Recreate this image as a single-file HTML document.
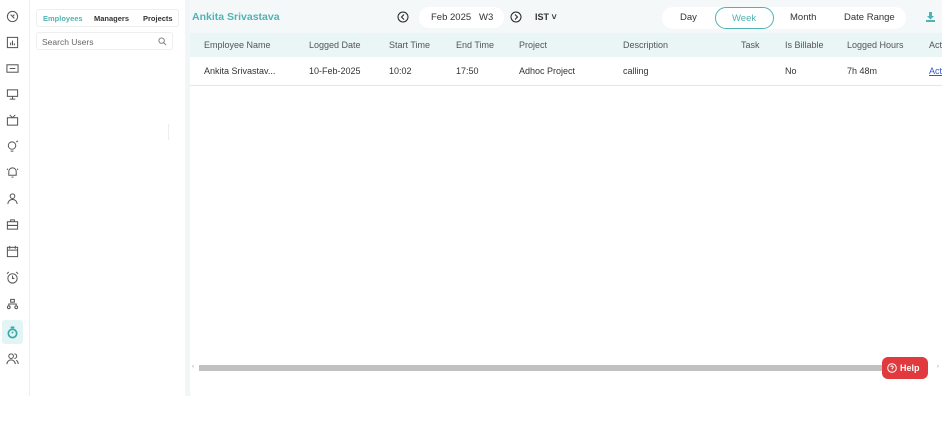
<!DOCTYPE html>
<html><head><meta charset="utf-8"><style>
*{margin:0;padding:0;box-sizing:border-box}
body{width:942px;height:448px;background:#fff;font-family:"Liberation Sans",sans-serif;font-size:9px;color:#333;position:relative;overflow:hidden}
.rail{position:absolute;left:0;top:0;width:30px;height:396px;border-right:1px solid #eee}
.rail svg{position:absolute;left:6px;width:13px;height:13px;fill:none;stroke:#555;stroke-width:1.1}
.panel{position:absolute;left:31px;top:0;width:154px;height:396px}
.tabs{position:absolute;left:5px;top:9px;width:143px;height:18px;border:1px solid #eee;border-radius:3px;font-size:7.5px;font-weight:bold}
.tabs span{position:absolute;top:4px}
.search{position:absolute;left:5px;top:32px;width:137px;height:18px;border:1px solid #eee;border-radius:3px;color:#666;font-size:8.5px;padding:4px 5px}
.split{position:absolute;left:185px;top:0;width:5px;height:396px;background:#f3f6f7}
.main{position:absolute;left:190px;top:0;width:752px;height:396px}
.hdr{position:absolute;left:0;top:0;width:752px;height:33px;background:#f5f8f9}
.th{position:absolute;left:0;top:33px;width:752px;height:24px;background:#eaf5f6}
.row{position:absolute;left:0;top:57px;width:752px;height:29px;border-bottom:1px solid #e6e6e6}
.c{position:absolute;white-space:nowrap}
.th .c{top:7px;color:#555}.row .c{top:9px;color:#333}
</style></head><body>
<div class="rail">
<svg style="top:10px" viewBox="0 0 14 14"><circle cx="7" cy="7" r="5.5"/><path d="M5 5l4 4M9 5l-2 2"/></svg>
<svg style="top:36px" viewBox="0 0 14 14"><rect x="1.5" y="1.5" width="11" height="11"/><path d="M5 10V7M7 10V5M9 10V8"/></svg>
<svg style="top:62px" viewBox="0 0 14 14"><rect x="1" y="3" width="12" height="8"/><path d="M4 7h6"/></svg>
<svg style="top:88px" viewBox="0 0 14 14"><rect x="1.5" y="2" width="11" height="7"/><path d="M7 9v3M4 12h6"/></svg>
<svg style="top:114px" viewBox="0 0 14 14"><rect x="1.5" y="4" width="11" height="8"/><path d="M4 1l3 3 3-3"/></svg>
<svg style="top:140px" viewBox="0 0 14 14"><circle cx="6.5" cy="6" r="4"/><path d="M5 12h3M11 2l2-1"/></svg>
<svg style="top:166px" viewBox="0 0 14 14"><path d="M3 10V6a4 4 0 018 0v4H3zM6 12h2M1 3l1 1M13 3l-1 1"/></svg>
<svg style="top:192px" viewBox="0 0 14 14"><circle cx="7" cy="4.5" r="2.5"/><path d="M2 13a5 5 0 0110 0"/></svg>
<svg style="top:218px" viewBox="0 0 14 14"><rect x="1.5" y="4" width="11" height="8"/><path d="M5 4V2h4v2M1.5 8h11"/></svg>
<svg style="top:245px" viewBox="0 0 14 14"><rect x="1.5" y="2.5" width="11" height="10"/><path d="M1.5 5.5h11M4 1v3M10 1v3"/></svg>
<svg style="top:271px" viewBox="0 0 14 14"><circle cx="7" cy="8" r="5"/><path d="M7 5v3h2M1 3l2-2M13 3l-2-2"/></svg>
<svg style="top:298px" viewBox="0 0 14 14"><rect x="5" y="1.5" width="4" height="3"/><circle cx="3" cy="10" r="1.5"/><circle cx="11" cy="10" r="1.5"/><path d="M3 8V6.5h8V8"/></svg>
<div style="position:absolute;left:2px;top:320px;width:21px;height:24px;background:#e3f4f4;border-radius:3px"></div>
<svg style="top:326px;stroke:#3aa9a9;stroke-width:1.8" viewBox="0 0 14 14"><circle cx="7" cy="8" r="4.5"/><path d="M5 1.5h4M7 8V6"/></svg>
<svg style="top:352px" viewBox="0 0 14 14"><circle cx="5.5" cy="4.5" r="2.5"/><path d="M1 13a4.5 4.5 0 019 0M9 2a2.5 2.5 0 010 5M11 9a4 4 0 012 4"/></svg>
</div>
<div class="panel">
<div class="tabs"><span style="left:6px;color:#4fb3b3">Employees</span><span style="left:57px;color:#333">Managers</span><span style="left:106px;color:#333">Projects</span></div>
<div class="search">Search Users<svg style="position:absolute;right:5px;top:4px;width:9px;height:9px" viewBox="0 0 10 10" fill="none" stroke="#777"><circle cx="4" cy="4" r="3"/><path d="M6.3 6.3L9 9"/></svg></div>
<div style="position:absolute;left:137px;top:124px;width:1px;height:16px;background:#eee"></div>
</div>
<div class="split"></div>
<div class="main">
<div class="hdr">
<div class="c" style="left:2px;top:11px;font-size:10.5px;font-weight:bold;color:#4fb3b3">Ankita Srivastava</div>
<svg style="position:absolute;left:207px;top:11px;width:12px;height:12px" viewBox="0 0 12 12" fill="none" stroke="#222"><circle cx="6" cy="6" r="5"/><path d="M7 3.5L4.5 6 7 8.5"/></svg>
<div style="position:absolute;left:229px;top:7px;width:85px;height:21px;background:#fff;border-radius:10px"></div>
<div class="c" style="left:241px;top:12px;font-size:9.5px">Feb 2025&nbsp;&nbsp; W3</div>
<svg style="position:absolute;left:320px;top:11px;width:12px;height:12px" viewBox="0 0 12 12" fill="none" stroke="#222"><circle cx="6" cy="6" r="5"/><path d="M5 3.5L7.5 6 5 8.5"/></svg>
<div class="c" style="left:345px;top:12px;font-size:9px;font-weight:bold">IST ˅</div>
<div style="position:absolute;left:472px;top:7px;width:244px;height:22px;background:#fff;border-radius:11px"></div>
<div class="c" style="left:490px;top:12px;font-size:9.5px">Day</div>
<div style="position:absolute;left:525px;top:7px;width:59px;height:22px;border:1px solid #4fb3b3;border-radius:11px"></div>
<div class="c" style="left:542px;top:13px;font-size:9.5px;color:#4fb3b3">Week</div>
<div class="c" style="left:600px;top:12px;font-size:9.5px">Month</div>
<div class="c" style="left:654px;top:12px;font-size:9.5px">Date Range</div>
<svg style="position:absolute;left:736px;top:12px;width:9px;height:10px" viewBox="0 0 9 10" fill="#4fb3b3"><path d="M3 0h3v4h2L4.5 7.5 1 4h2zM0 8h9v2H0z"/></svg>
</div>
<div class="th">
<div class="c" style="left:14px">Employee Name</div><div class="c" style="left:119px">Logged Date</div><div class="c" style="left:199px">Start Time</div><div class="c" style="left:266px">End Time</div><div class="c" style="left:329px">Project</div><div class="c" style="left:433px">Description</div><div class="c" style="left:551px">Task</div><div class="c" style="left:595px">Is Billable</div><div class="c" style="left:657px">Logged Hours</div><div class="c" style="left:739px">Act</div>
</div>
<div class="row">
<div class="c" style="left:14px">Ankita Srivastav...</div><div class="c" style="left:119px">10-Feb-2025</div><div class="c" style="left:199px">10:02</div><div class="c" style="left:266px">17:50</div><div class="c" style="left:329px">Adhoc Project</div><div class="c" style="left:433px">calling</div><div class="c" style="left:595px">No</div><div class="c" style="left:657px">7h 48m</div><div class="c" style="left:739px;color:#3355cc;text-decoration:underline">Act</div>
</div>
<div class="c" style="left:2px;top:364px;font-size:6px;color:#999">‹</div>
<div style="position:absolute;left:9px;top:365px;width:690px;height:6px;background:#c1c1c1"></div>
<div class="c" style="left:747px;top:364px;font-size:6px;color:#999">›</div>
<div style="position:absolute;left:692px;top:357px;width:46px;height:22px;background:#e03a3e;border-radius:6px;color:#fff;font-size:9px;font-weight:bold">
<svg style="position:absolute;left:5px;top:6px;width:10px;height:10px" viewBox="0 0 10 10" fill="none" stroke="#fff"><circle cx="5" cy="5" r="4.3"/><path d="M3.8 4a1.2 1.2 0 112 1c-.6.3-.8.6-.8 1.2M5 7.5v.3"/></svg>
<span style="position:absolute;left:18px;top:6px">Help</span></div>
</div>
</body></html>
